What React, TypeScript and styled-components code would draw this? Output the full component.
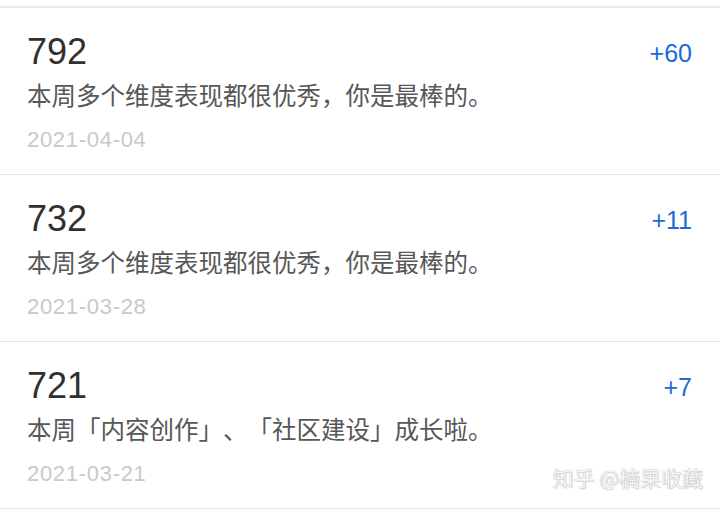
import styled, { createGlobalStyle } from "styled-components";

const GlobalStyle = createGlobalStyle`
  body {
    margin: 0;
    background: #ffffff;
    font-family: "Liberation Sans", "Noto Sans CJK SC", sans-serif;
  }
`;

const Page = styled.div`
  position: relative;
  width: 720px;
  height: 509px;
  padding-top: 6px;
  box-sizing: border-box;
  overflow: hidden;
`;

const List = styled.div`
  border-top: 2px solid #ebebeb;
  display: flex;
  flex-direction: column;
`;

const Row = styled.div`
  display: flex;
  justify-content: space-between;
  height: 167px;
  box-sizing: border-box;
  padding: 0 28px 0 27px;
  border-bottom: 1px solid #e3e3e3;
`;

const Left = styled.div`
  display: flex;
  flex-direction: column;
  padding-top: 26px;
`;

const Score = styled.div`
  font-size: 36px;
  line-height: 36px;
  color: #303030;
`;

const Desc = styled.div`
  margin-top: 8px;
  font-family: "Noto Sans CJK SC", sans-serif;
  font-size: 24.5px;
  line-height: 34px;
  color: #575757;
  text-spacing-trim: space-all;
  font-feature-settings: normal;
`;

const DateText = styled.div`
  margin-top: 15px;
  font-size: 22px;
  line-height: 26px;
  letter-spacing: 0.7px;
  color: #c9c9c9;
`;

const Delta = styled.div`
  padding-top: 30px;
  font-size: 25px;
  line-height: 30px;
  color: #1a6bd8;
`;

const Watermark = styled.div`
  position: absolute;
  right: 17px;
  bottom: 20px;
  font-family: "Noto Sans CJK SC", sans-serif;
  font-size: 21px;
  line-height: 24px;
  color: #f6f6f6;
  text-shadow: 0 0 1px rgba(0, 0, 0, 0.4), 1px 1px 1px rgba(0, 0, 0, 0.12);
`;

const records = [
  { score: 792, text: "本周多个维度表现都很优秀，你是最棒的。", date: "2021-04-04", delta: "+60" },
  { score: 732, text: "本周多个维度表现都很优秀，你是最棒的。", date: "2021-03-28", delta: "+11" },
  { score: 721, text: "本周「内容创作」、「社区建设」成长啦。", date: "2021-03-21", delta: "+7" },
];

export default function App() {
  return (
    <Page>
      <GlobalStyle />
      <List>
        {records.map((r) => (
          <Row key={r.date}>
            <Left>
              <Score>{r.score}</Score>
              <Desc>{r.text}</Desc>
              <DateText>{r.date}</DateText>
            </Left>
            <Delta>{r.delta}</Delta>
          </Row>
        ))}
      </List>
      <Watermark>知乎 @楠果收藏</Watermark>
    </Page>
  );
}
